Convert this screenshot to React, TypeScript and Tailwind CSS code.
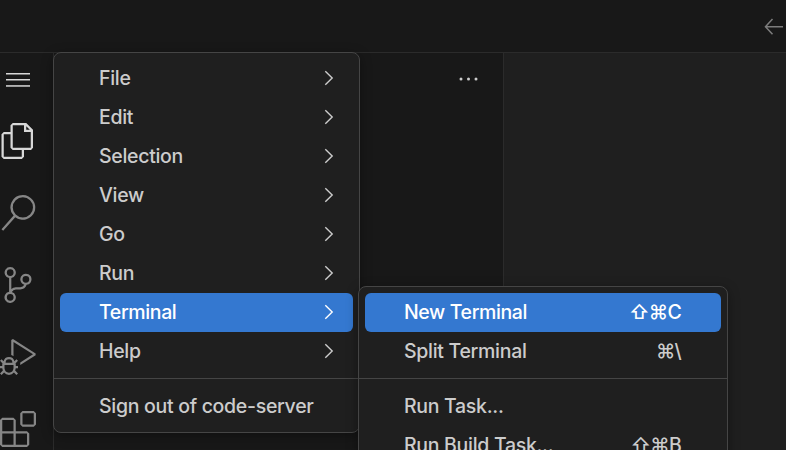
import type { ReactNode } from "react";
import { VscFiles, VscSearch, VscSourceControl, VscDebugAlt, VscExtensions } from "react-icons/vsc";

const MENU = ["File", "Edit", "Selection", "View", "Go", "Run", "Terminal", "Help"];

function Chevron() {
  return (
    <svg className="mr-[19px] mb-[2px] h-4 w-[10px] shrink-0" viewBox="0 0 10 16" fill="none" stroke="currentColor" strokeWidth="1.4">
      <path d="M1.3 1.2 8.2 8l-6.9 6.8" />
    </svg>
  );
}

function Row({ label, active, right }: { label: string; active?: boolean; right?: ReactNode }) {
  return (
    <div
      className={`flex h-[39px] shrink-0 items-center justify-between rounded-[6px] pl-[39px] whitespace-pre ${
        active ? "bg-[#3478d0] tracking-[-0.38px] text-white" : "text-[#cccccc]"
      }`}
    >
      <span>{label}</span>
      {right}
    </div>
  );
}

function Keys({ children }: { children: string }) {
  return <span className="mr-10 tracking-[-0.7px]">{children}</span>;
}

function Separator() {
  return <div className="-mx-[6px] mt-[7px] mb-2 h-px shrink-0 bg-[#454545]" />;
}

export default function App() {
  return (
    <div className="relative flex h-[450px] w-[786px] flex-col overflow-hidden bg-[#181818] font-['Inter','Liberation_Sans',sans-serif] text-[19.5px] leading-none font-[490] tracking-[-0.3px]">
      <header className="flex h-[53px] shrink-0 justify-end border-b border-[#2b2b2b] pt-[18px] pr-[3px]">
        <svg className="h-[18px] w-[19px]" viewBox="0 0 19 18" fill="none" stroke="#7c7c7c" strokeWidth="1.5">
          <path d="M8.5 1 1.5 8.7 8.5 16.3M1.5 8.7H19" />
        </svg>
      </header>
      <div className="flex min-h-0 flex-1">
        <nav className="flex w-[54px] shrink-0 flex-col border-r border-[#2b2b2b] text-[#868686]">
          <svg className="mt-5 ml-[6px] h-[14px] w-6 shrink-0" viewBox="0 0 24 14" fill="#d7d7d7">
            <rect width="24" height="1.5" />
            <rect y="6" width="24" height="1.5" />
            <rect y="12.2" width="24" height="1.5" />
          </svg>
          <div className="mt-9 flex flex-col gap-9">
            <VscFiles className="size-9 shrink-0 text-[#d7d7d7]" />
            <VscSearch className="size-9 shrink-0" />
            <VscSourceControl className="size-9 shrink-0" />
            <VscDebugAlt className="size-9 shrink-0" />
            <VscExtensions className="size-9 shrink-0" />
          </div>
        </nav>
        <aside className="flex w-[450px] shrink-0 justify-end border-r border-[#2b2b2b] pt-[24px] pr-[24px]">
          <svg className="h-[5px] w-5" viewBox="0 0 20 5" fill="#cccccc">
            <circle cx="2" cy="2" r="1.5" />
            <circle cx="9.5" cy="2" r="1.5" />
            <circle cx="17" cy="2" r="1.5" />
          </svg>
        </aside>
        <main className="flex-1 bg-[#1f1f1f]" />
      </div>

      <div className="absolute top-[52px] left-[53px] flex h-[381px] w-[307px] flex-col rounded-lg border border-[#454545] bg-[#1f1f1f] p-[6px] shadow-[0_3px_12px_rgba(0,0,0,0.36)]">
        {MENU.map((m) => (
          <Row key={m} label={m} active={m === "Terminal"} right={<Chevron />} />
        ))}
        <Separator />
        <Row label="Sign out of code-server" />
      </div>

      <div className="absolute top-[286px] left-[358px] flex h-[240px] w-[370px] flex-col rounded-lg border border-[#454545] bg-[#1f1f1f] p-[6px] shadow-[0_3px_12px_rgba(0,0,0,0.36)]">
        <Row label="New Terminal" active right={<Keys>⇧⌘C</Keys>} />
        <Row label="Split Terminal" right={<Keys>⌘\</Keys>} />
        <Separator />
        <Row label="Run Task..." />
        <Row label="Run Build Task..." right={<Keys>⇧⌘B</Keys>} />
      </div>
    </div>
  );
}
